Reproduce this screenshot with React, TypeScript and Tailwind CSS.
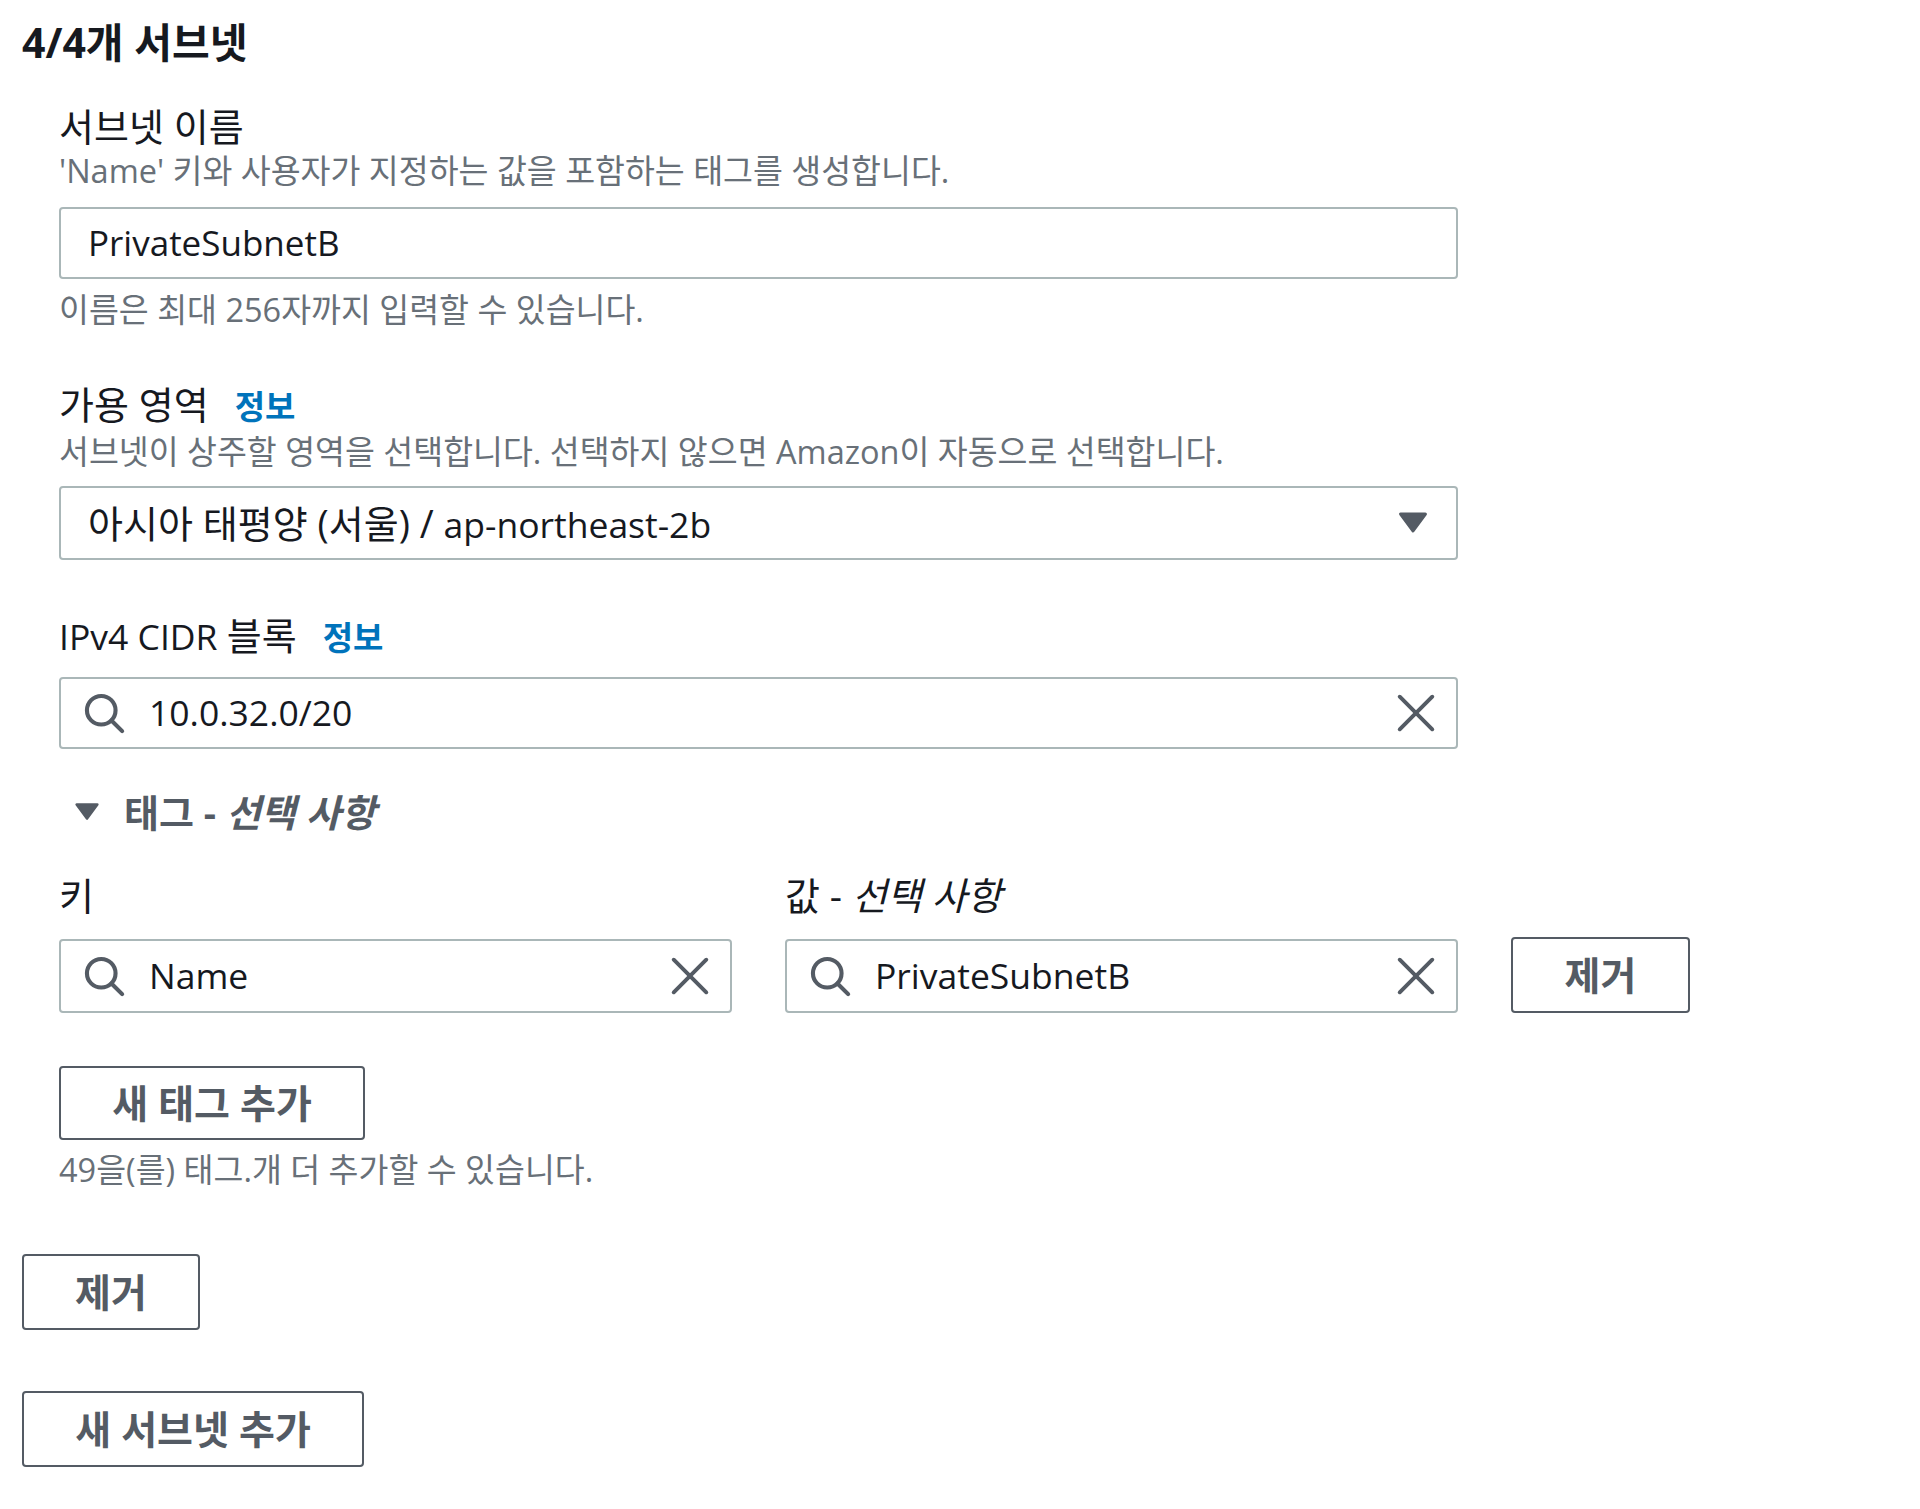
import React from "react"

const SearchIcon = () => (
  <svg viewBox="0 0 16 16" className="size-[44px] shrink-0" fill="none" stroke="#545b64" strokeWidth="1.5" strokeLinecap="round">
    <circle cx="7" cy="7" r="5.2" />
    <path d="M14.6 14.6l-3.9-3.9" />
  </svg>
)

const CloseIcon = () => (
  <svg viewBox="0 0 16 16" className="size-[42px] shrink-0" fill="none" stroke="#545b64" strokeWidth="1.5" strokeLinecap="round">
    <path d="M1.8 1.8l12.4 12.4M14.2 1.8L1.8 14.2" />
  </svg>
)

const CaretDown = ({ className }: { className: string }) => (
  <svg viewBox="0 0 16 16" className={className} fill="#545b64" stroke="#545b64" strokeWidth="1.4" strokeLinejoin="round">
    <path d="M2.5 4h11l-5.5 7.5z" />
  </svg>
)

const Label = ({ children }: { children: React.ReactNode }) => (
  <div className="text-[38px] leading-[50px]">{children}</div>
)

const Desc = ({ children, className = "" }: { children: React.ReactNode; className?: string }) => (
  <div className={`text-[32.5px] leading-[40px] text-[#687078] ${className}`}>{children}</div>
)

const Info = () => <span className="ml-[26px] text-[33px] font-bold text-[#0073bb]">정보</span>

const SearchInput = ({ value, className = "" }: { value: string; className?: string }) => (
  <div className={`flex items-center rounded-[4px] border-2 border-[#aab7b8] bg-white pl-[21px] pr-[19px] ${className}`}>
    <SearchIcon />
    <span className="ml-[23px] flex-1 text-[35.5px]">{value}</span>
    <CloseIcon />
  </div>
)

const Button = ({ children, className = "" }: { children: React.ReactNode; className?: string }) => (
  <button className={`flex items-center justify-center rounded-[4px] border-2 border-[#545b64] bg-white text-[39px] font-bold text-[#545b64] ${className}`}>
    {children}
  </button>
)

export default function App() {
  return (
    <div className="min-h-screen bg-white pl-[22px] pt-[19px] font-['Open_Sans','Noto_Sans_CJK_KR',sans-serif] text-[#16191f]">
      <h2 className="text-[41px] font-bold leading-[46px]">4/4개 서브넷</h2>

      <div className="pl-[37px]">
        {/* subnet name */}
        <div className="mt-[36px]">
          <Label>서브넷 이름</Label>
          <Desc>'Name' 키와 사용자가 지정하는 값을 포함하는 태그를 생성합니다.</Desc>
          <div className="mt-[16px] flex h-[72px] w-[1399px] items-center rounded-[4px] border-2 border-[#aab7b8] pl-[27px] text-[35px]">
            PrivateSubnetB
          </div>
          <Desc className="mt-[11px]">이름은 최대 256자까지 입력할 수 있습니다.</Desc>
        </div>

        {/* availability zone */}
        <div className="mt-[49px]">
          <Label>
            가용 영역
            <Info />
          </Label>
          <Desc>서브넷이 상주할 영역을 선택합니다. 선택하지 않으면 Amazon이 자동으로 선택합니다.</Desc>
          <div className="mt-[14px] flex h-[74px] w-[1399px] items-center justify-between rounded-[4px] border-2 border-[#aab7b8] pl-[27px] pr-[25px]">
            <span className="text-[38px]">
              아시아 태평양 (서울) / <span className="text-[35.5px]">ap-northeast-2b</span>
            </span>
            <CaretDown className="size-[36px]" />
          </div>
        </div>

        {/* cidr */}
        <div className="mt-[50px]">
          <Label>
            <span className="text-[35.5px]">IPv4 CIDR </span>블록
            <Info />
          </Label>
          <SearchInput value="10.0.32.0/20" className="mt-[14px] h-[72px] w-[1399px]" />
        </div>

        {/* tags */}
        <div className="mt-[38px] flex h-[50px] items-center pl-[13px] text-[38px] font-bold text-[#545b64]">
          <CaretDown className="size-[30px]" />
          <span className="ml-[22px]">
            태그 - <i>선택 사항</i>
          </span>
        </div>

        <div className="mt-[33px] flex gap-[53px]">
          <div className="w-[673px]">
            <Label>키</Label>
            <SearchInput value="Name" className="mt-[19px] h-[74px]" />
          </div>
          <div className="w-[673px]">
            <Label>
              값 - <i>선택 사항</i>
            </Label>
            <SearchInput value="PrivateSubnetB" className="mt-[19px] h-[74px]" />
          </div>
          <div className="flex flex-col justify-end">
            <Button className="h-[76px] w-[179px]">제거</Button>
          </div>
        </div>

        <Button className="mt-[53px] h-[74px] w-[306px]">새 태그 추가</Button>
        <Desc className="mt-[10px]">49을(를) 태그.개 더 추가할 수 있습니다.</Desc>
      </div>

      <Button className="mt-[64px] h-[76px] w-[178px]">제거</Button>
      <Button className="mt-[61px] h-[76px] w-[342px]">새 서브넷 추가</Button>
    </div>
  )
}
